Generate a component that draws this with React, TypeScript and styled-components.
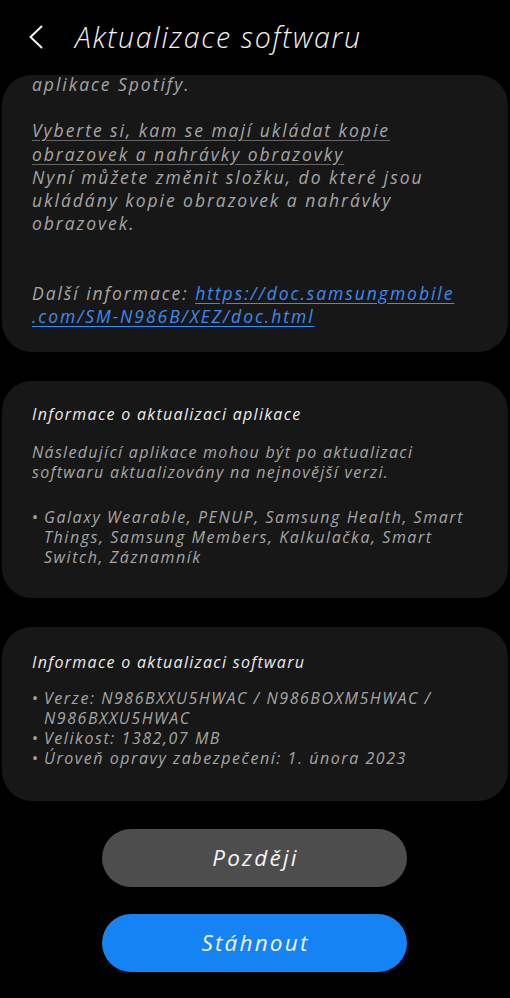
import React from "react";
import styled, { createGlobalStyle } from "styled-components";

const Global = createGlobalStyle`
  html, body { margin: 0; padding: 0; background: #000; }
  body { font-family: "Open Sans", "Noto Sans", sans-serif; }
  * { box-sizing: border-box; }
`;

const Page = styled.div`
  width: 510px;
  min-height: 998px;
  background: #000;
  display: flex;
  flex-direction: column;
  font-style: italic;
`;

const Header = styled.header`
  height: 75px;
  display: flex;
  align-items: center;
  padding-left: 25px;
  gap: 28px;
`;

const BackButton = styled.button`
  width: 22px;
  height: 28px;
  padding: 0;
  border: 0;
  background: transparent;
  display: flex;
  align-items: center;
  justify-content: center;
  margin-top: -2px;
`;

const Title = styled.h1`
  margin: 0;
  font-size: 28.5px;
  font-weight: 300;
  color: #f4f4f4;
  letter-spacing: 1.7px;
  margin-top: -2px;
`;

const Content = styled.main`
  display: flex;
  flex-direction: column;
  gap: 29px;
  padding: 0 2px;
`;

const Card = styled.section<{ $pt?: number; $pb?: number }>`
  background: #171717;
  border-radius: 30px;
  padding: ${(p) => p.$pt ?? 24}px 20px ${(p) => p.$pb ?? 31}px 30px;
`;

const NoteText = styled.div<{ $first?: boolean }>`
  font-size: 17.5px;
  line-height: 23.2px;
  letter-spacing: 1.95px;
  color: #a6a6a6;
  white-space: nowrap;
  margin-top: ${(p) => (p.$first ? -2 : 0)}px;
`;

const Gap = styled.div<{ $lines: number }>`
  height: ${(p) => p.$lines * 23.2}px;
`;

const Underlined = styled.span`
  text-decoration: underline;
  text-decoration-color: #666;
  text-underline-offset: 3px;
`;

const Link = styled.a`
  color: #3d8bf0;
  text-decoration: underline;
  text-underline-offset: 3px;
`;

const Heading = styled.h2`
  margin: 0;
  font-size: 16px;
  line-height: 22px;
  font-weight: 400;
  letter-spacing: 1.3px;
  color: #ececec;
`;

const Para = styled.p<{ $mt: number }>`
  margin: ${(p) => p.$mt}px 0 0;
  font-size: 16px;
  line-height: 20px;
  letter-spacing: 1.3px;
  color: #a6a6a6;
  white-space: nowrap;
`;

const BulletList = styled.ul<{ $mt: number }>`
  list-style: none;
  margin: ${(p) => p.$mt}px 0 0;
  padding: 0;
  font-size: 16px;
  line-height: 20px;
  letter-spacing: 1.55px;
  color: #a6a6a6;
`;

const Bullet = styled.li`
  position: relative;
  padding-left: 12px;
  white-space: nowrap;
  &::before {
    content: "•";
    position: absolute;
    left: 0;
    top: 0;
    font-style: normal;
  }
`;

const Actions = styled.div`
  display: flex;
  flex-direction: column;
  align-items: center;
  gap: 27px;
  margin-top: 28px;
  padding-right: 1px;
`;

const PillButton = styled.button<{ $primary?: boolean }>`
  width: 305px;
  height: 58px;
  border: 0;
  border-radius: 29px;
  background: ${(p) => (p.$primary ? "#1683f5" : "#4d4d4d")};
  color: #f4f4f4;
  font-family: "Open Sans", "Noto Sans", sans-serif;
  font-style: italic;
  font-size: 22.5px;
  font-weight: 400;
  letter-spacing: 2.2px;
  padding: 0 0 2px 2px;
`;

export default function App() {
  return (
    <>
      <Global />
      <Page>
        <Header>
          <BackButton aria-label="Zpět">
            <svg width="16" height="24" viewBox="0 0 16 24" fill="none">
              <path d="M13.5 1.5 L2.5 12 L13.5 22.5" stroke="#f2f2f2" strokeWidth="2" strokeLinecap="round" strokeLinejoin="round" />
            </svg>
          </BackButton>
          <Title>Aktualizace softwaru</Title>
        </Header>
        <Content>
          <Card $pt={0} $pb={24}>
            <NoteText $first>aplikace Spotify.</NoteText>
            <Gap $lines={1} />
            <NoteText>
              <Underlined>Vyberte si, kam se mají ukládat kopie</Underlined>
              <br />
              <Underlined>obrazovek a nahrávky obrazovky</Underlined>
              <br />
              Nyní můžete změnit složku, do které jsou
              <br />
              ukládány kopie obrazovek a nahrávky
              <br />
              obrazovek.
            </NoteText>
            <Gap $lines={2} />
            <NoteText>
              Další informace:{" "}
              <Link href="#">
                https://doc.samsungmobile
                <br />
                .com/SM-N986B/XEZ/doc.html
              </Link>
            </NoteText>
          </Card>

          <Card $pt={22} $pb={31}>
            <Heading>Informace o aktualizaci aplikace</Heading>
            <Para $mt={17}>
              Následující aplikace mohou být po aktualizaci
              <br />
              softwaru aktualizovány na nejnovější verzi.
            </Para>
            <BulletList $mt={25}>
              <Bullet>
                Galaxy Wearable, PENUP, Samsung Health, Smart
                <br />
                Things, Samsung Members, Kalkulačka, Smart
                <br />
                Switch, Záznamník
              </Bullet>
            </BulletList>
          </Card>

          <Card $pt={24} $pb={33}>
            <Heading>Informace o aktualizaci softwaru</Heading>
            <BulletList $mt={15}>
              <Bullet>
                Verze: N986BXXU5HWAC / N986BOXM5HWAC /
                <br />
                N986BXXU5HWAC
              </Bullet>
              <Bullet>Velikost: 1382,07 MB</Bullet>
              <Bullet>Úroveň opravy zabezpečení: 1. února 2023</Bullet>
            </BulletList>
          </Card>
        </Content>
        <Actions>
          <PillButton>Později</PillButton>
          <PillButton $primary>Stáhnout</PillButton>
        </Actions>
      </Page>
    </>
  );
}
